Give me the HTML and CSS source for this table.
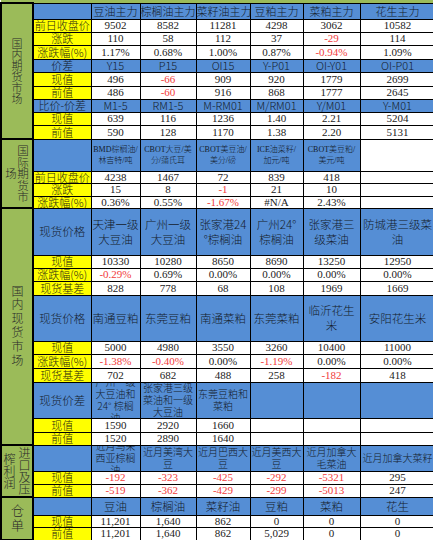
FILE: index.html
```html
<!DOCTYPE html>
<html lang="zh">
<head>
<meta charset="utf-8">
<title>油脂油料日报</title>
<link rel="stylesheet" href="styles.css">
</head>
<body>
<table class="sheet">
<colgroup>
<col class="c0"><col class="c1"><col class="c2"><col class="c3"><col class="c4"><col class="c5"><col class="c6"><col class="c7">
</colgroup>
<tbody>
<tr class="h-top"><td class="top" colspan="8"></td></tr>

<tr class="h16">
<td class="sec" rowspan="10"><div class="vt vt1">国内期货市场</div></td>
<td class="hd"></td>
<td class="hd">豆油主力</td><td class="hd">棕榈油主力</td><td class="hd">菜籽油主力</td><td class="hd">豆粕主力</td><td class="hd">菜粕主力</td><td class="hd">花生主力</td>
</tr>
<tr class="h13"><td class="lb">前日收盘价</td><td class="v">9502</td><td class="v">8582</td><td class="v">11281</td><td class="v">4298</td><td class="v">3062</td><td class="v">10582</td></tr>
<tr class="h13"><td class="lb">涨跌</td><td class="v">110</td><td class="v">58</td><td class="v">112</td><td class="v">37</td><td class="v neg">-29</td><td class="v">114</td></tr>
<tr class="h14"><td class="lb">涨跌幅(%)</td><td class="v">1.17%</td><td class="v">0.68%</td><td class="v">1.00%</td><td class="v">0.87%</td><td class="v neg">-0.94%</td><td class="v">1.09%</td></tr>
<tr class="h13"><td class="hd">价差</td><td class="hd">Y15</td><td class="hd">P15</td><td class="hd">OI15</td><td class="hd">Y-P01</td><td class="hd">OI-Y01</td><td class="hd">OI-P01</td></tr>
<tr class="h14"><td class="lb">现值</td><td class="v">496</td><td class="v neg">-66</td><td class="v">909</td><td class="v">920</td><td class="v">1779</td><td class="v">2699</td></tr>
<tr class="h13"><td class="lb">前值</td><td class="v">486</td><td class="v neg">-60</td><td class="v">916</td><td class="v">868</td><td class="v">1777</td><td class="v">2645</td></tr>
<tr class="h13"><td class="hd">比价-价差</td><td class="hd">M1-5</td><td class="hd">RM1-5</td><td class="hd">M-RM01</td><td class="hd">M/RM01</td><td class="hd">Y/M01</td><td class="hd">Y-M01</td></tr>
<tr class="h13"><td class="lb">现值</td><td class="v">639</td><td class="v">116</td><td class="v">1236</td><td class="v">1.40</td><td class="v">2.21</td><td class="v">5204</td></tr>
<tr class="h14"><td class="lb">前值</td><td class="v">590</td><td class="v">128</td><td class="v">1170</td><td class="v">1.38</td><td class="v">2.20</td><td class="v">5131</td></tr>

<tr class="h32">
<td class="sec" rowspan="4"><div class="vt vt2">国际期货市<br>场</div></td>
<td class="hd"></td>
<td class="hd small">BMD棕榈油/<br>林吉特/吨</td><td class="hd small">CBOT大豆/美<br>分/蒲氏耳</td><td class="hd small">CBOT美豆油/<br>美分/磅</td><td class="hd small">ICE油菜籽/<br>加元/吨</td><td class="hd small">CBOT美豆粕/<br>美元/吨</td><td class="v"></td>
</tr>
<tr class="h12"><td class="lb">前日收盘价</td><td class="v">4238</td><td class="v">1467</td><td class="v">72</td><td class="v">839</td><td class="v">418</td><td class="v"></td></tr>
<tr class="h13"><td class="lb">涨跌</td><td class="v">15</td><td class="v">8</td><td class="v neg">-1</td><td class="v">21</td><td class="v">10</td><td class="v"></td></tr>
<tr class="h12"><td class="lb">涨跌幅(%)</td><td class="v">0.36%</td><td class="v">0.55%</td><td class="v neg">-1.67%</td><td class="v">#N/A</td><td class="v">2.43%</td><td class="v"></td></tr>

<tr class="h47">
<td class="sec" rowspan="11"><div class="vt vt3">国内现货市场</div></td>
<td class="hd big">现货价格</td>
<td class="hd big">天津一级<br>大豆油</td><td class="hd big">广州一级<br>大豆油</td><td class="hd big">张家港24<br>°棕榈油</td><td class="hd big">广州24°<br>棕榈油</td><td class="hd big">张家港三<br>级菜油</td><td class="hd big">防城港三级菜<br>油</td>
</tr>
<tr class="h13"><td class="lb">现值</td><td class="v">10330</td><td class="v">10280</td><td class="v">8650</td><td class="v">8690</td><td class="v">13250</td><td class="v">12950</td></tr>
<tr class="h13"><td class="lb">涨跌幅(%)</td><td class="v neg">-0.29%</td><td class="v">0.69%</td><td class="v">0.00%</td><td class="v">0.00%</td><td class="v">0.00%</td><td class="v">0.00%</td></tr>
<tr class="h14"><td class="lb">现货基差</td><td class="v">828</td><td class="v">778</td><td class="v">68</td><td class="v">108</td><td class="v">1969</td><td class="v">1669</td></tr>
<tr class="h46">
<td class="hd big">现货价格</td>
<td class="hd big">南通豆粕</td><td class="hd big">东莞豆粕</td><td class="hd big">南通菜粕</td><td class="hd big">东莞菜粕</td><td class="hd big">临沂花生<br>米</td><td class="hd big">安阳花生米</td>
</tr>
<tr class="h13"><td class="lb">现值</td><td class="v">5000</td><td class="v">4980</td><td class="v">3550</td><td class="v">3260</td><td class="v">10400</td><td class="v">11000</td></tr>
<tr class="h14"><td class="lb">涨跌幅(%)</td><td class="v neg">-1.38%</td><td class="v neg">-0.40%</td><td class="v">0.00%</td><td class="v neg">-1.19%</td><td class="v">0.00%</td><td class="v">0.00%</td></tr>
<tr class="h14"><td class="lb">现货基差</td><td class="v">702</td><td class="v">682</td><td class="v">488</td><td class="v">258</td><td class="v neg">-182</td><td class="v">418</td></tr>
<tr class="h36">
<td class="hd big">现货价差</td>
<td class="hd mid"><div class="clip clip36">广州一级<br>大豆油和<br>24° 棕榈<br>油</div></td>
<td class="hd mid"><div class="clip clip36">张家港三级<br>菜油和一级<br>大豆油</div></td>
<td class="hd mid"><div class="clip clip36">东莞豆粕和<br>菜粕</div></td>
<td class="hd"></td><td class="hd"></td><td class="hd"></td>
</tr>
<tr class="h14"><td class="lb">现值</td><td class="v">1590</td><td class="v">2920</td><td class="v">1660</td><td class="v"></td><td class="v"></td><td class="v"></td></tr>
<tr class="h13"><td class="lb">前值</td><td class="v">1520</td><td class="v">2890</td><td class="v">1640</td><td class="v"></td><td class="v"></td><td class="v"></td></tr>

<tr class="h26">
<td class="sec" rowspan="3"><div class="vt vt4">进口及压<br>榨利润</div></td>
<td class="hd"></td>
<td class="hd mid"><div class="clip clip26">近月马来<br>西亚棕榈<br>油</div></td>
<td class="hd mid"><div class="clip clip26">近月美湾大<br>豆</div></td>
<td class="hd mid"><div class="clip clip26">近月巴西大<br>豆</div></td>
<td class="hd mid"><div class="clip clip26">近月美西大<br>豆</div></td>
<td class="hd mid"><div class="clip clip26">近月加拿大<br>毛菜油</div></td>
<td class="hd mid"><div class="clip clip26">近月加拿大菜籽</div></td>
</tr>
<tr class="h13"><td class="lb">现值</td><td class="v neg">-192</td><td class="v neg">-323</td><td class="v neg">-425</td><td class="v neg">-292</td><td class="v neg">-5321</td><td class="v">295</td></tr>
<tr class="h13"><td class="lb">前值</td><td class="v neg">-519</td><td class="v neg">-362</td><td class="v neg">-429</td><td class="v neg">-299</td><td class="v neg">-5013</td><td class="v">247</td></tr>

<tr class="h18">
<td class="sec" rowspan="3"><div class="vt vt5">仓单</div></td>
<td class="hd"></td>
<td class="hd big">豆油</td><td class="hd big">棕榈油</td><td class="hd big">菜籽油</td><td class="hd big">豆粕</td><td class="hd big">菜粕</td><td class="hd big">花生</td>
</tr>
<tr class="h12"><td class="lb">现值</td><td class="v">11,201</td><td class="v">1,640</td><td class="v">862</td><td class="v">0</td><td class="v">0</td><td class="v">0</td></tr>
<tr class="h13"><td class="lb">前值</td><td class="v">11,201</td><td class="v">1,640</td><td class="v">862</td><td class="v">5,029</td><td class="v">0</td><td class="v">0</td></tr>
</tbody>
</table>
</body>
</html>
```

FILE: styles.css
```css
html, body {
  margin: 0;
  padding: 0;
  background: #ffffff;
  overflow: hidden;
}

.sheet {
  border-collapse: collapse;
  table-layout: fixed;
  width: 434px;
  font-family: "Liberation Serif", "Noto Sans CJK SC", serif;
  font-size: 11px;
  color: #222222;
}

.c0 { width: 32px; }
.c1 { width: 58px; }
.c2 { width: 49px; }
.c3 { width: 56px; }
.c4 { width: 54px; }
.c5 { width: 53px; }
.c6 { width: 57px; }
.c7 { width: 75px; }

.sheet td {
  border: 1px solid #000000;
  padding: 0;
  text-align: center;
  vertical-align: middle;
  line-height: 11px;
  white-space: nowrap;
}

.h-top { height: 3px; }
.h12 { height: 12px; }
.h13 { height: 13px; }
.h14 { height: 14px; }
.h16 { height: 16px; }
.h18 { height: 18px; }
.h26 { height: 26px; }
.h32 { height: 32px; }
.h36 { height: 36px; }
.h46 { height: 46px; }
.h47 { height: 47px; }

.sheet td.top {
  background: #9bbb59;
  border-top: none;
  border-left: none;
  border-right: none;
  height: 2px;
}

.sheet td.sec {
  background: #9bbb59;
  border: 2px solid #000000;
  color: #2a2a2a;
}

.sheet td.hd {
  background: #558ed5;
  color: #141c2c;
  font-family: "Noto Sans CJK SC", "Liberation Serif", serif;
  font-size: 11px;
  font-weight: 300;
}

.sheet td.hd.small {
  font-family: "Liberation Serif", "Noto Sans CJK SC", serif;
  font-size: 8px;
  line-height: 11px;
}

.sheet td.hd.big {
  font-size: 11.5px;
  line-height: 15px;
}

.sheet td.hd.mid {
  font-size: 10px;
  line-height: 12px;
}

.sheet td.lb {
  background: #ffff00;
  color: #2a2a10;
  font-family: "Noto Sans CJK SC", "Liberation Serif", serif;
  font-size: 11px;
  font-weight: 300;
}

.sheet td.v {
  background: #ffffff;
}

.sheet td.neg {
  color: #f23b3b;
}

.clip {
  display: flex;
  flex-direction: column;
  justify-content: center;
  overflow: hidden;
}

.clip36 { height: 35px; }
.clip26 { height: 25px; }

.vt {
  writing-mode: vertical-rl;
  text-align: center;
  margin: 0 auto;
  font-family: "Noto Sans CJK SC", sans-serif;
  font-weight: 300;
  white-space: nowrap;
}

.vt1 { font-size: 11px; line-height: 12px; height: 130px; }
.vt2 { font-size: 11.5px; line-height: 12px; height: 62px; }
.vt3 { font-size: 12px; line-height: 12px; letter-spacing: 1.8px; height: 230px; }
.vt4 { font-size: 12px; line-height: 15px; height: 48px; }
.vt5 { font-size: 13px; line-height: 14px; letter-spacing: 2px; height: 40px; }
```
